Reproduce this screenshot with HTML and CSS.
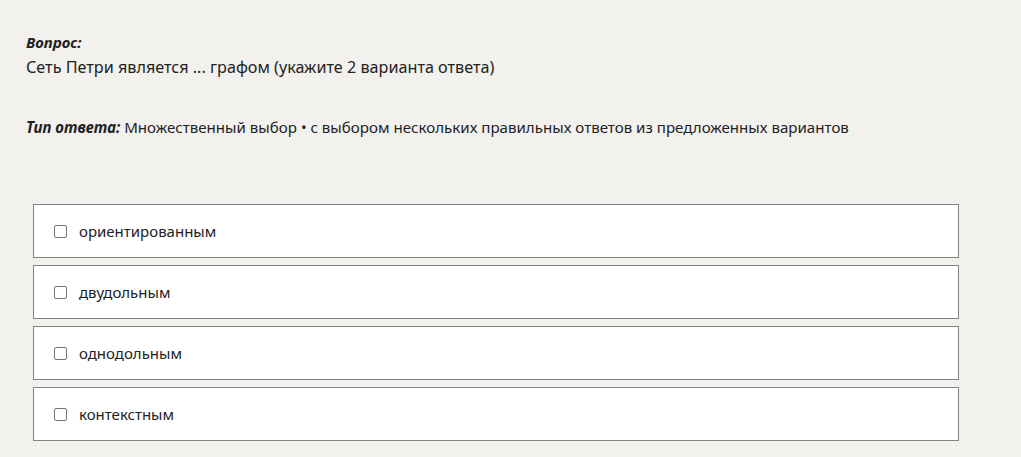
FILE: index.html
```html
<!DOCTYPE html>
<html lang="ru">
<head>
<meta charset="utf-8">
<title>Вопрос</title>
<link rel="stylesheet" href="styles.css">
</head>
<body>
<main class="page">
  <section class="question">
    <div class="label">Вопрос:</div>
    <div class="text">Сеть Петри является ... графом (укажите 2 варианта ответа)</div>
  </section>
  <p class="type"><span class="label">Тип ответа:</span> Множественный выбор • с выбором нескольких правильных ответов из предложенных вариантов</p>
  <ul class="options">
    <li class="option"><label><span class="box"></span><span>ориентированным</span></label></li>
    <li class="option"><label><span class="box"></span><span>двудольным</span></label></li>
    <li class="option"><label><span class="box"></span><span>однодольным</span></label></li>
    <li class="option"><label><span class="box"></span><span>контекстным</span></label></li>
  </ul>
</main>
</body>
</html>
```
FILE: styles.css
```css
html, body {
  margin: 0;
  padding: 0;
  background: #f3f1ee;
}
body {
  font-family: "Noto Sans", "Open Sans", sans-serif;
  font-size: 15px;
  color: #222;
}
.page {
  padding: 30px 0 0 26px;
}
.question {
  line-height: 25px;
}
.question .text {
  font-size: 16.2px;
}
.label {
  font-weight: bold;
  font-style: italic;
}
.type {
  margin: 35px 0 0 0;
  line-height: 25px;
  font-size: 15.1px;
}
.options {
  list-style: none;
  margin: 64px 0 0 7px;
  padding: 0;
  width: 926px;
  display: flex;
  flex-direction: column;
  gap: 7px;
}
.option {
  background: #fff;
  border: 1px solid #838383;
  height: 52px;
}
.option label {
  display: flex;
  align-items: center;
  height: 100%;
  padding-left: 20px;
  gap: 12px;
}
.box {
  width: 11px;
  height: 11px;
  border: 1px solid #767676;
  border-radius: 2px;
  background: #fff;
}
```
